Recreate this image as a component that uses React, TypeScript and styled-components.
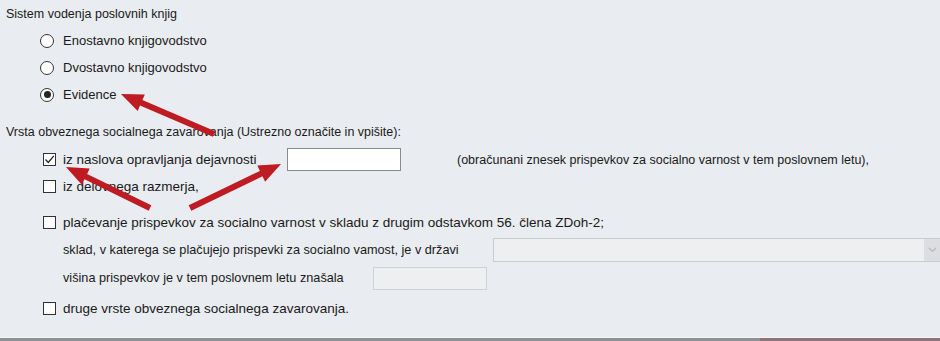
import React from "react";
import styled, { createGlobalStyle } from "styled-components";

const Global = createGlobalStyle`
  html, body { margin: 0; padding: 0; background: #e9ecf0; }
  body { font-family: "Liberation Sans", Arial, sans-serif; }
`;

const Page = styled.div`
  position: relative;
  width: 940px;
  height: 341px;
  overflow: hidden;
  background: #e9ecf0;
  color: #1a1a1a;
  display: flex;
  flex-direction: column;
  font-family: "Liberation Sans", Arial, sans-serif;
`;

const SectionLabel = styled.div<{ $top: number }>`
  margin-top: ${(p) => p.$top}px;
  padding-left: 6px;
  height: 16px;
  line-height: 16px;
  font-size: 12.5px;
  white-space: nowrap;
`;

const OptionList = styled.div<{ $top: number; $indent: number }>`
  margin-top: ${(p) => p.$top}px;
  padding-left: ${(p) => p.$indent}px;
  display: flex;
  flex-direction: column;
`;

const OptionRow = styled.label<{ $gap?: number; $top?: number; $size?: number }>`
  display: flex;
  align-items: center;
  height: 27px;
  margin-top: ${(p) => p.$top ?? 0}px;
  gap: ${(p) => p.$gap ?? 7}px;
  font-size: ${(p) => p.$size ?? 13.5}px;
  white-space: nowrap;
`;

const RadioDot = styled.span<{ $checked?: boolean }>`
  width: 14px;
  height: 14px;
  box-sizing: border-box;
  border: 1px solid #333333;
  border-radius: 50%;
  background: #ffffff;
  display: flex;
  align-items: center;
  justify-content: center;
  flex: none;
  &::after {
    content: "";
    display: ${(p) => (p.$checked ? "block" : "none")};
    width: 7px;
    height: 7px;
    border-radius: 50%;
    background: #262626;
  }
`;

const Box = styled.span`
  width: 13px;
  height: 13px;
  box-sizing: border-box;
  border: 1px solid #333333;
  background: #ffffff;
  display: flex;
  align-items: center;
  justify-content: center;
  flex: none;
`;

const LabelText = styled.span<{ $width?: number }>`
  display: inline-block;
  ${(p) => (p.$width ? `width: ${p.$width}px;` : "")}
`;

const TextInput = styled.div<{ $width: number; $disabled?: boolean }>`
  width: ${(p) => p.$width}px;
  height: 23px;
  box-sizing: border-box;
  flex: none;
  background: ${(p) => (p.$disabled ? "#eeeff1" : "#ffffff")};
  border: 1px solid ${(p) => (p.$disabled ? "#cfd1d4" : "#8a8a8a")};
`;

const Note = styled.span`
  margin-left: 49px;
  font-size: 12.5px;
`;

const SubRow = styled.div`
  display: flex;
  align-items: center;
  height: 28px;
  padding-left: 20px;
  font-size: 12.7px;
  white-space: nowrap;
`;

const SubText = styled.span<{ $width: number }>`
  width: ${(p) => p.$width}px;
  flex: none;
`;

const Combo = styled.div`
  width: 449px;
  height: 24px;
  box-sizing: border-box;
  flex: none;
  display: flex;
  justify-content: flex-end;
  background: #eeeff1;
  border: 1px solid #c9cbce;
`;

const ComboButton = styled.div`
  width: 17px;
  height: 100%;
  background: #dcdde0;
  display: flex;
  align-items: center;
  justify-content: center;
`;

const BottomStrip = styled.div`
  margin-top: auto;
  height: 3px;
  display: flex;
  border-top: 1px solid #f4f5f7;
`;

const StripPart = styled.div<{ $color: string; $grow: number }>`
  flex: ${(p) => p.$grow};
  background: ${(p) => p.$color};
`;

const Overlay = styled.svg`
  position: absolute;
  left: 0;
  top: 0;
  pointer-events: none;
`;

const Check = () => (
  <svg width="11" height="11" viewBox="0 0 11 11">
    <polyline points="1.5,5.5 4.3,8.5 9.8,1.8" fill="none" stroke="#222" strokeWidth="1.3" />
  </svg>
);

const Checkbox: React.FC<{ checked?: boolean }> = ({ checked }) => (
  <Box>{checked ? <Check /> : null}</Box>
);

function arrowPoints(tx: number, ty: number, hx: number, hy: number, shaft = 6, headLen = 22, headW = 18) {
  const dx = hx - tx;
  const dy = hy - ty;
  const len = Math.hypot(dx, dy);
  const ux = dx / len;
  const uy = dy / len;
  const nx = -uy;
  const ny = ux;
  const bx = hx - ux * headLen;
  const by = hy - uy * headLen;
  const s = shaft / 2;
  const w = headW / 2;
  const pts = [
    [tx + nx * s, ty + ny * s],
    [bx + nx * s, by + ny * s],
    [bx + nx * w, by + ny * w],
    [hx, hy],
    [bx - nx * w, by - ny * w],
    [bx - nx * s, by - ny * s],
    [tx - nx * s, ty - ny * s],
  ];
  return pts.map((p) => `${p[0].toFixed(1)},${p[1].toFixed(1)}`).join(" ");
}

const arrows = [
  { tx: 214, ty: 134, hx: 121, hy: 94 },
  { tx: 150, ty: 208, hx: 66, hy: 167 },
  { tx: 190, ty: 208, hx: 281, hy: 164 },
];

export default function App() {
  return (
    <>
      <Global />
      <Page>
        <SectionLabel $top={6}>Sistem vodenja poslovnih knjig</SectionLabel>
        <OptionList $top={5} $indent={40}>
          <OptionRow $gap={9} $size={13}>
            <RadioDot />
            <span>Enostavno knjigovodstvo</span>
          </OptionRow>
          <OptionRow $gap={9} $size={13}>
            <RadioDot />
            <span>Dvostavno knjigovodstvo</span>
          </OptionRow>
          <OptionRow $gap={9} $size={13}>
            <RadioDot $checked />
            <span>Evidence</span>
          </OptionRow>
        </OptionList>

        <SectionLabel $top={16}>
          Vrsta obveznega socialnega zavarovanja (Ustrezno označite in vpišite):
        </SectionLabel>
        <OptionList $top={6} $indent={43}>
          <OptionRow>
            <Checkbox checked />
            <LabelText $width={217}>iz naslova opravljanja dejavnosti</LabelText>
            <TextInput $width={114} />
            <Note>(obračunani znesek prispevkov za socialno varnost v tem poslovnem letu),</Note>
          </OptionRow>
          <OptionRow>
            <Checkbox />
            <LabelText>iz delovnega razmerja,</LabelText>
          </OptionRow>
          <OptionRow $top={9}>
            <Checkbox />
            <LabelText>plačevanje prispevkov za socialno varnost v skladu z drugim odstavkom 56. člena ZDoh-2;</LabelText>
          </OptionRow>
          <SubRow>
            <SubText $width={430}>sklad, v katerega se plačujejo prispevki za socialno vamost, je v državi</SubText>
            <Combo>
              <ComboButton>
                <svg width="9" height="6" viewBox="0 0 9 6">
                  <polyline points="1,1 4.5,4.5 8,1" fill="none" stroke="#b4b6ba" strokeWidth="1.2" />
                </svg>
              </ComboButton>
            </Combo>
          </SubRow>
          <SubRow>
            <SubText $width={310}>višina prispevkov je v tem poslovnem letu znašala</SubText>
            <TextInput $width={114} $disabled />
          </SubRow>
          <OptionRow $top={3}>
            <Checkbox />
            <LabelText>druge vrste obveznega socialnega zavarovanja.</LabelText>
          </OptionRow>
        </OptionList>

        <BottomStrip>
          <StripPart $color="#8c9096" $grow={760} />
          <StripPart $color="#8d7378" $grow={180} />
        </BottomStrip>

        <Overlay width="940" height="341" viewBox="0 0 940 341">
          {arrows.map((a, i) => (
            <polygon key={i} points={arrowPoints(a.tx, a.ty, a.hx, a.hy)} fill="#bf1b22" />
          ))}
        </Overlay>
      </Page>
    </>
  );
}
